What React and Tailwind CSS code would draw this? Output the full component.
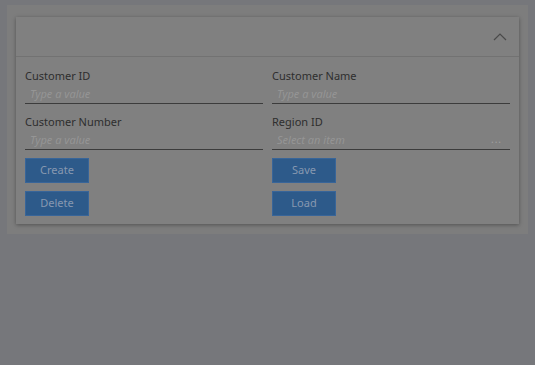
import React from 'react';

const fields = [
  [
    { label: 'Customer ID', placeholder: 'Type a value' },
    { label: 'Customer Number', placeholder: 'Type a value' },
  ],
  [
    { label: 'Customer Name', placeholder: 'Type a value' },
    { label: 'Region ID', placeholder: 'Select an item', lookup: true },
  ],
];

const actions = [
  ['Create', 'Delete'],
  ['Save', 'Load'],
];

const Field = ({ label, placeholder, lookup }) => (
  <div className="flex flex-col">
    <label className="h-[17px] text-[11px] leading-[17px] text-[#2e2e2e]">{label}</label>
    <div className="mt-[2px] flex h-[18px] items-center border-b border-[#3c3c3c] px-[5px]">
      <span className="flex-1 text-[11px] italic text-[#959595]">{placeholder}</span>
      {lookup && <span className="-mt-[4px] pr-[3px] text-[10px] leading-none tracking-[1px] text-[#a0a0a0]">...</span>}
    </div>
  </div>
);

const Button = ({ children }) => (
  <button className="h-[25px] w-[64px] border border-[#386599] bg-[#2d5a8a] text-[11px] text-[#8798b0]">
    {children}
  </button>
);

const App = () => {
  return (
    <div
      className="h-[365px] w-[535px] bg-[#76777b] pt-[5px] pl-[7px]"
      style={{ fontFamily: '"Noto Sans", "Open Sans", sans-serif' }}
    >
      <div className="w-[521px] bg-[#7d7d7d] px-[9px] pt-[12px] pb-[10px]">
        <div className="bg-[#808080] shadow-[0_1px_4px_rgba(0,0,0,0.35)]">
          <div className="flex h-[40px] items-center justify-end border-b border-[#727272] pr-[12px]">
            <svg width="14" height="8" viewBox="0 0 14 8" fill="none">
              <path d="M1 7L7 1L13 7" stroke="#4a4a4a" strokeWidth="1.2" />
            </svg>
          </div>
          <div className="grid grid-cols-2 gap-x-[9px] px-[9px] pt-[10px] pb-[8px]">
            {fields.map((col, i) => (
              <div key={i} className="flex flex-col">
                <div className="flex flex-col gap-[9px]">
                  {col.map((f) => (
                    <Field key={f.label} {...f} />
                  ))}
                </div>
                <div className="mt-[8px] flex flex-col gap-[8px]">
                  {actions[i].map((a) => (
                    <Button key={a}>{a}</Button>
                  ))}
                </div>
              </div>
            ))}
          </div>
        </div>
      </div>
    </div>
  );
};

export default App;
